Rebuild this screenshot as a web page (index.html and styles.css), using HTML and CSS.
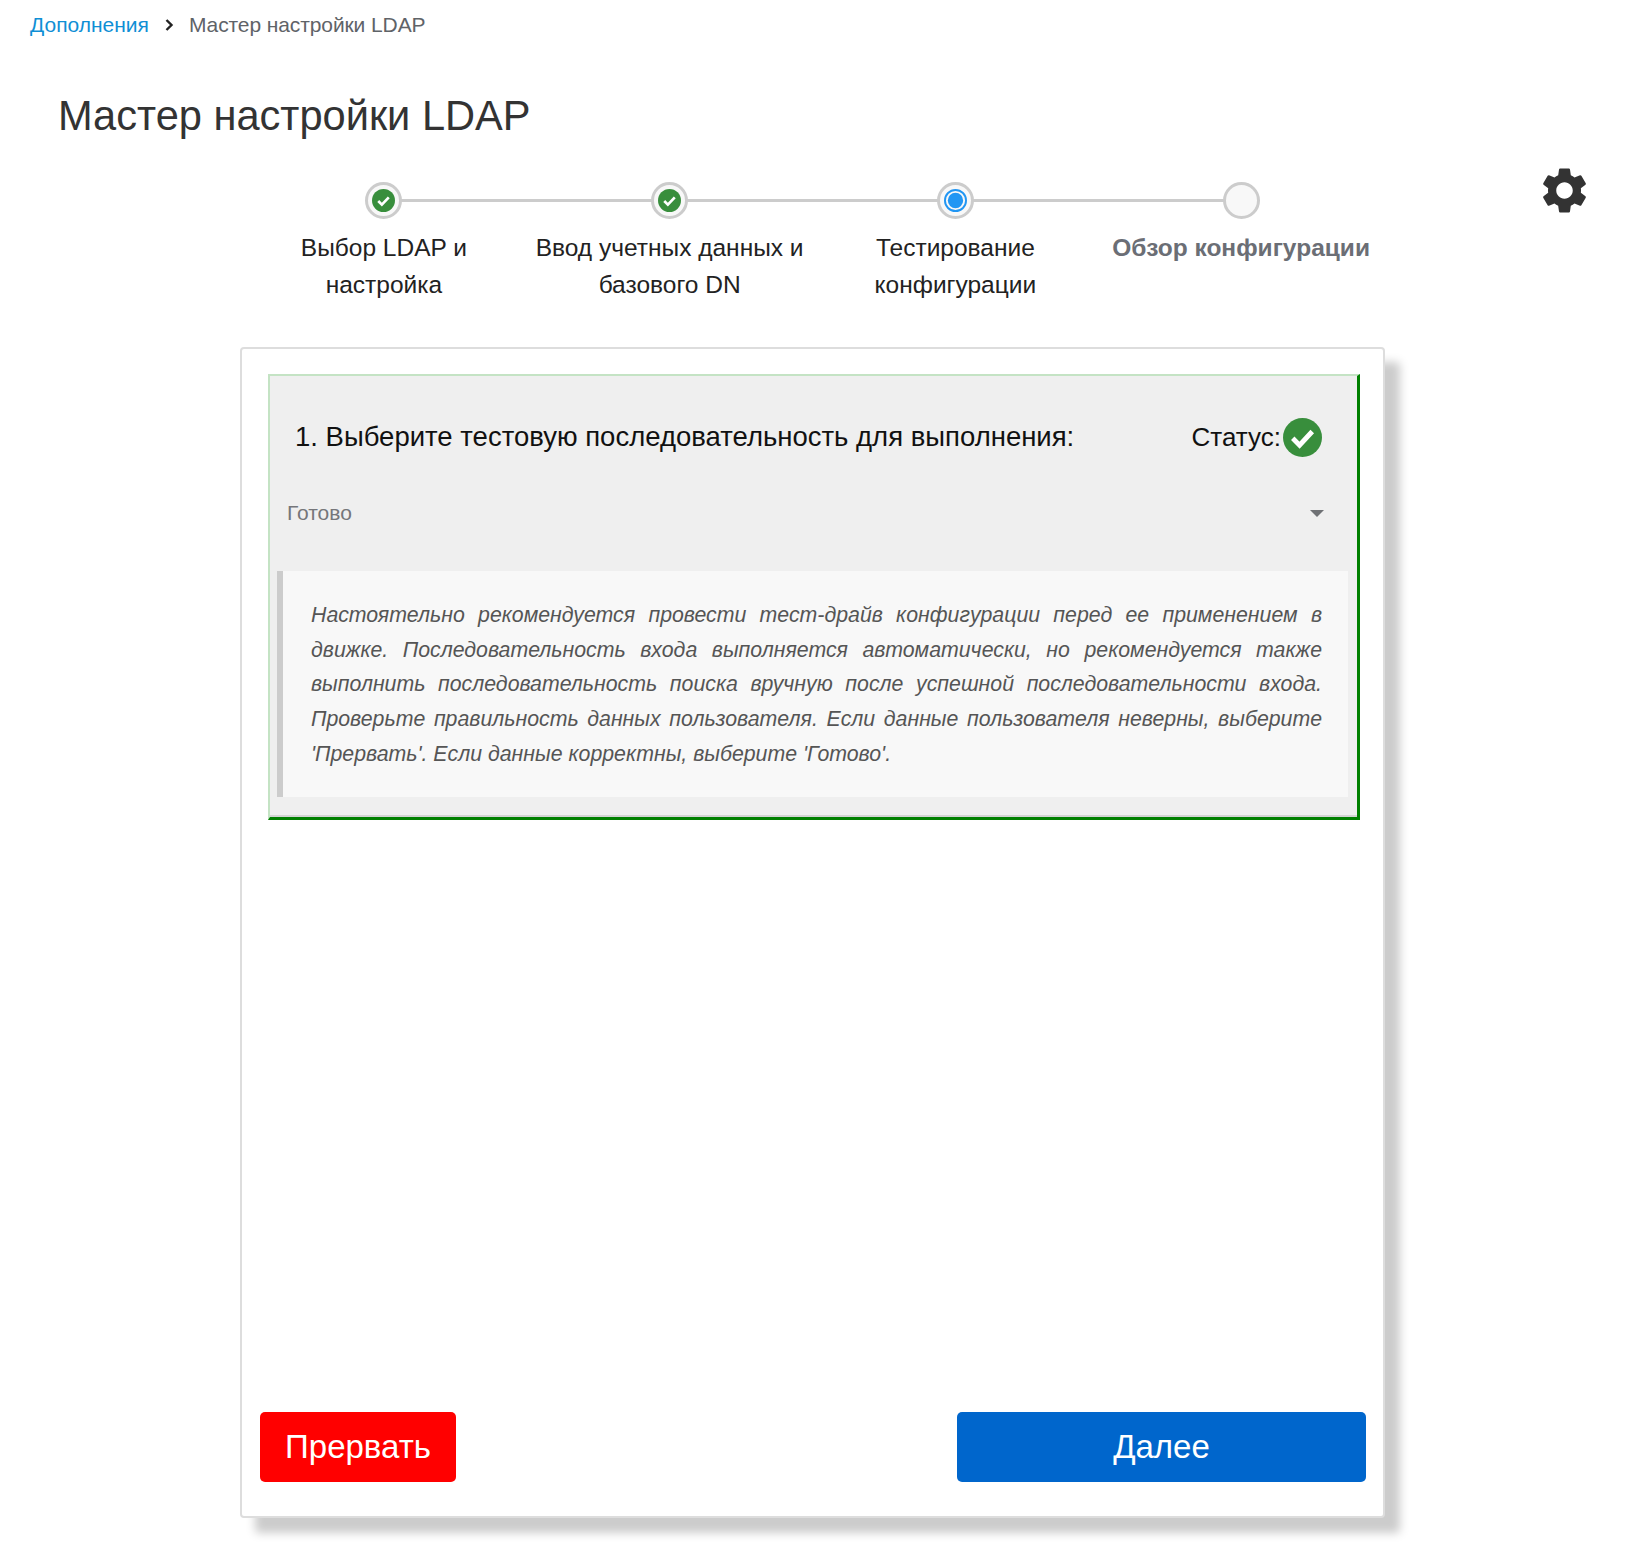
FILE: index.html
```html
<!DOCTYPE html>
<html lang="ru">
<head>
<meta charset="utf-8">
<title>Мастер настройки LDAP</title>
<link rel="stylesheet" href="styles.css">
</head>
<body>
<nav class="crumbs">
  <a class="crumb-link" href="#">Дополнения</a>
  <svg class="crumb-sep" viewBox="0 0 10 14" aria-hidden="true"><path d="M2.5 2l5 5-5 5" fill="none" stroke="#222" stroke-width="2.4"/></svg>
  <span class="crumb-current">Мастер настройки LDAP</span>
</nav>
<h1 class="title">Мастер настройки LDAP</h1>
<div class="top-row">
  <ol class="steps">
    <li class="step">
      <span class="dot"><svg class="dot-icon" viewBox="0 0 24 24"><circle cx="12" cy="12" r="12" fill="#388e3c"/><path d="M6.5 12.5l3.8 3.8 7.2-7.6" fill="none" stroke="#fff" stroke-width="2.8"/></svg></span>
      <span class="step-label">Выбор LDAP и настройка</span>
    </li>
    <li class="step">
      <span class="dot"><svg class="dot-icon" viewBox="0 0 24 24"><circle cx="12" cy="12" r="12" fill="#388e3c"/><path d="M6.5 12.5l3.8 3.8 7.2-7.6" fill="none" stroke="#fff" stroke-width="2.8"/></svg></span>
      <span class="step-label">Ввод учетных данных и базового DN</span>
    </li>
    <li class="step">
      <span class="dot"><svg class="dot-icon" viewBox="0 0 24 24"><circle cx="12" cy="12" r="11" fill="none" stroke="#2196f3" stroke-width="2"/><circle cx="12" cy="12" r="8" fill="#2196f3"/></svg></span>
      <span class="step-label">Тестирование конфигурации</span>
    </li>
    <li class="step step-last">
      <span class="dot"></span>
      <span class="step-label step-label-todo">Обзор конфигурации</span>
    </li>
  </ol>
  <svg class="gear" viewBox="0 0 24 24" aria-label="Настройки"><path fill="#333" d="M19.14,12.94c0.04-0.3,0.06-0.61,0.06-0.94c0-0.32-0.02-0.64-0.07-0.94l2.03-1.58c0.18-0.14,0.23-0.41,0.12-0.61l-1.92-3.32c-0.12-0.22-0.37-0.29-0.59-0.22l-2.39,0.96c-0.5-0.38-1.03-0.7-1.62-0.94L14.4,2.81c-0.04-0.24-0.24-0.41-0.48-0.41h-3.84c-0.24,0-0.43,0.17-0.47,0.41L9.25,5.35C8.66,5.59,8.12,5.92,7.63,6.29L5.24,5.33c-0.22-0.08-0.47,0-0.59,0.22L2.74,8.87C2.62,9.08,2.66,9.34,2.86,9.48l2.03,1.58C4.84,11.36,4.8,11.69,4.8,12s0.02,0.64,0.07,0.94l-2.03,1.58c-0.18,0.14-0.23,0.41-0.12,0.61l1.92,3.32c0.12,0.22,0.37,0.29,0.59,0.22l2.39-0.96c0.5,0.38,1.03,0.7,1.62,0.94l0.36,2.54c0.05,0.24,0.24,0.41,0.48,0.41h3.84c0.24,0,0.44-0.17,0.47-0.41l0.36-2.54c0.59-0.24,1.13-0.56,1.62-0.94l2.39,0.96c0.22,0.08,0.47,0,0.59-0.22l1.92-3.32c0.12-0.22,0.07-0.47-0.12-0.61L19.14,12.94z M12,15.6c-1.98,0-3.6-1.62-3.6-3.6s1.62-3.6,3.6-3.6s3.6,1.62,3.6,3.6S13.98,15.6,12,15.6z"/></svg>
</div>
<main class="card">
  <section class="panel">
    <header class="panel-head">
      <h2 class="panel-title">1. Выберите тестовую последовательность для выполнения:</h2>
      <div class="status">
        <span>Статус:</span>
        <svg class="status-icon" viewBox="0 0 24 24"><circle cx="12" cy="12" r="12" fill="#388e3c"/><path d="M6 12.5l4.2 4.2 7.8-8.4" fill="none" stroke="#fff" stroke-width="3"/></svg>
      </div>
    </header>
    <div class="select">
      <span>Готово</span>
      <span class="select-arrow"></span>
    </div>
    <blockquote class="note">Настоятельно рекомендуется провести тест-драйв конфигурации перед ее применением в движке. Последовательность входа выполняется автоматически, но рекомендуется также выполнить последовательность поиска вручную после успешной последовательности входа. Проверьте правильность данных пользователя. Если данные пользователя неверны, выберите 'Прервать'. Если данные корректны, выберите 'Готово'.</blockquote>
  </section>
  <footer class="actions">
    <button class="btn btn-abort" type="button">Прервать</button>
    <button class="btn btn-next" type="button">Далее</button>
  </footer>
</main>
</body>
</html>
```
FILE: styles.css
```css
* { box-sizing: border-box; }
body {
  margin: 0;
  padding-bottom: 36px;
  font-family: "Liberation Sans", Arial, sans-serif;
  color: #333;
  background: #fff;
}
.crumbs {
  display: flex;
  align-items: center;
  height: 50px;
  padding-left: 30px;
  font-size: 21px;
}
.crumb-link { color: #0f8fd5; text-decoration: none; }
.crumb-sep { width: 10px; height: 14px; margin: 0 15px 0 15px; }
.crumb-current { color: #5f6368; letter-spacing: -0.1px; }
.title {
  margin: 39px 0 0 58px;
  font-size: 41.6px;
  line-height: 54px;
  font-weight: 400;
  color: #333;
}
.top-row {
  display: flex;
  margin-top: 39px;
  padding-left: 241px;
}
.steps {
  display: flex;
  width: 1143px;
  height: 165px;
  margin: 0;
  padding: 0;
  list-style: none;
}
.step {
  position: relative;
  flex: 1 1 0;
  display: flex;
  flex-direction: column;
  align-items: center;
  text-align: center;
}
.step::after {
  content: "";
  position: absolute;
  top: 17px;
  left: 50%;
  width: 100%;
  height: 3px;
  background: #ccc;
}
.step-last::after { display: none; }
.dot {
  position: relative;
  z-index: 1;
  display: flex;
  align-items: center;
  justify-content: center;
  width: 37px;
  height: 37px;
  border: 3px solid #ccc;
  border-radius: 50%;
  background: #f8f8f8;
}
.dot-icon { width: 23px; height: 23px; }
.step-label {
  margin-top: 10px;
  padding: 0 6px;
  font-size: 24.5px;
  line-height: 37px;
  color: #222;
}
.step-label-todo {
  padding: 0;
  font-weight: 700;
  color: #6b6e75;
  white-space: nowrap;
}
.gear { width: 55px; height: 55px; margin: -19px 0 0 153px; }
.card {
  display: flex;
  flex-direction: column;
  width: 1145px;
  height: 1171px;
  margin-left: 240px;
  padding: 25px 17px 34px 18px;
  border: 2px solid #ddd;
  border-radius: 4px;
  background: #fff;
  box-shadow: 15px 15px 10px #ccc;
}
.panel {
  height: 446px;
  margin: 0 6px 0 8px;
  border-style: solid;
  border-color: #c4e3c4 #008000 #008000 #c4e3c4;
  border-width: 2px 3px 3px 2px;
  background: #efefef;
  box-shadow: inset 0 -2px 0 #d4d4d4;
}
.panel-head {
  display: flex;
  align-items: center;
  justify-content: space-between;
  height: 122px;
  padding: 0 35px 0 25px;
  color: #111;
}
.panel-title { margin: 0; font-size: 27.5px; font-weight: 400; }
.status { display: flex; align-items: center; font-size: 26px; }
.status-icon { width: 39px; height: 39px; margin-left: 2px; }
.select {
  display: flex;
  align-items: center;
  justify-content: space-between;
  height: 30px;
  padding: 0 33px 0 17px;
  font-size: 21px;
  color: #75767a;
}
.select-arrow {
  width: 0;
  height: 0;
  border-left: 7px solid transparent;
  border-right: 7px solid transparent;
  border-top: 7px solid #6f7175;
}
.note {
  height: 226px;
  margin: 43px 9px 0 7px;
  padding: 27px 26px 0 28px;
  border-left: 6px solid #ccc;
  background: #f8f8f8;
  font-size: 21.3px;
  line-height: 34.7px;
  font-style: italic;
  text-align: justify;
  color: #555;
}
.actions {
  display: flex;
  justify-content: space-between;
  margin-top: auto;
}
.btn {
  height: 70px;
  border: 0;
  border-radius: 5px;
  font-family: inherit;
  font-size: 33px;
  color: #fff;
}
.btn-abort { width: 196px; background: #f00; }
.btn-next { width: 409px; background: #06c; }
```
